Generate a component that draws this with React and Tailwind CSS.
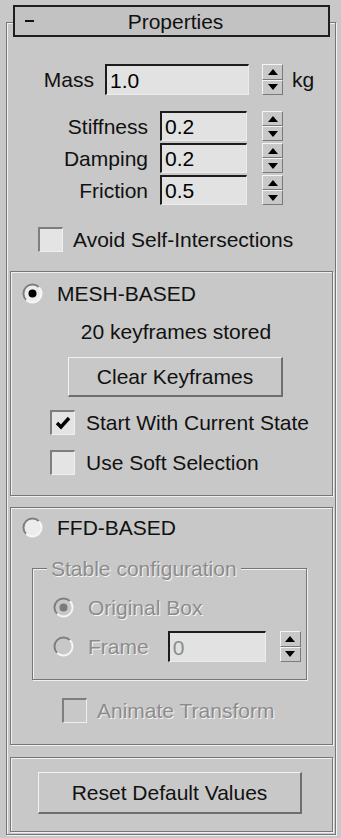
function Spinner({ h = "h-[30px]", disabled = false }) {
  const fill = disabled ? "#555" : "#000";
  return (
    <div className={`w-[21px] ${h} flex flex-col`}>
      <div className="flex-1 flex items-center justify-center border-t border-l border-[#f4f4f4] border-b border-r border-b-[#7a7a7a] border-r-[#7a7a7a]">
        <svg width="10" height="6" viewBox="0 0 10 6"><path d="M5 0 L10 6 L0 6 Z" fill={fill} /></svg>
      </div>
      <div className="flex-1 flex items-center justify-center border-t border-l border-[#f4f4f4] border-b border-r border-b-[#7a7a7a] border-r-[#7a7a7a]">
        <svg width="10" height="6" viewBox="0 0 10 6"><path d="M0 0 L10 0 L5 6 Z" fill={fill} /></svg>
      </div>
    </div>
  );
}

function Field({ value, w, h = "h-[30px]", disabled = false }) {
  return (
    <div
      className={`${w} ${h} bg-[#e2e2e2] border-t-2 border-l-2 border-[#1c1c1c] border-b border-r border-b-[#ececec] border-r-[#ececec] flex items-center pl-[3px] leading-none ${
        disabled ? "text-[#8c8c8c]" : "text-black"
      }`}
    >
      {value}
    </div>
  );
}

function Check({ checked = false, disabled = false }) {
  return (
    <div className={`w-[25px] h-[25px] border-t-2 border-l-2 border-[#7e7e7e] border-b border-r border-b-[#f0f0f0] border-r-[#f0f0f0] flex items-center justify-center ${disabled ? "bg-[#c8c8c8]" : "bg-[#e4e4e4]"}`}>
      {checked && (
        <svg width="16" height="14" viewBox="0 0 16 14">
          <path d="M2 7 L6 11 L14 2" stroke="#000" strokeWidth="3.4" fill="none" />
        </svg>
      )}
    </div>
  );
}

function Radio({ on = false, disabled = false }) {
  return (
    <svg width="21" height="21" viewBox="0 0 21 21" className="shrink-0">
      <circle cx="10.5" cy="10.5" r="9" fill={disabled ? "#c8c8c8" : "#ececec"} />
      <path d="M4.1 16.9 A9 9 0 0 1 16.9 4.1" stroke="#7e7e7e" strokeWidth="2" fill="none" />
      <path d="M16.9 4.1 A9 9 0 0 1 4.1 16.9" stroke="#f6f6f6" strokeWidth="2" fill="none" />
      {on && <circle cx="10.5" cy="10.5" r="4" fill={disabled ? "#7a7a7a" : "#000"} />}
    </svg>
  );
}

function Button({ label, cls }) {
  return (
    <div className={`${cls} bg-[#c8c8c8] border-t border-l border-[#f2f2f2] border-b-2 border-r-2 border-b-[#6e6e6e] border-r-[#6e6e6e] flex items-center justify-center`}>
      {label}
    </div>
  );
}

const dim = "text-[#8c8c8c] [text-shadow:1px_1px_0_#f4f4f4]";
const group = "border border-[#767676] shadow-[inset_1px_1px_0_#f0f0f0,1px_1px_0_#f0f0f0]";

export default function App() {
  return (
    <div className="w-[341px] h-[838px] bg-[#c8c8c8] pt-[5px] font-['Liberation_Sans',Arial,sans-serif] text-[21px] text-[#111] leading-none overflow-hidden">
      <div className="relative z-10 ml-[13px] w-[317px] h-[32px] border-2 border-[#1e1e1e] bg-[#c2c2c2] flex items-center">
        <span className="w-[30px] pl-[10px] flex items-center">
          <span className="block w-[9px] h-[2px] bg-[#111]" />
        </span>
        <span className="flex-1 text-center pr-[22px]">Properties</span>
      </div>

      <div className={`-mt-[15px] ml-[6px] w-[330px] h-[813px] ${group} pt-[41px]`}>
        <div className="flex items-center h-[31px]">
          <span className="w-[87px] text-right">Mass</span>
          <div className="ml-[11px]"><Field value="1.0" w="w-[144px]" h="h-[31px]" /></div>
          <div className="ml-[13px]"><Spinner h="h-[31px]" /></div>
          <span className="ml-[9px]">kg</span>
        </div>

        <div className="mt-[16px] flex flex-col gap-[2px]">
          {[["Stiffness", "0.2"], ["Damping", "0.2"], ["Friction", "0.5"]].map(([l, v]) => (
            <div key={l} className="flex items-center h-[30px]">
              <span className="w-[141px] text-right">{l}</span>
              <div className="ml-[12px]"><Field value={v} w="w-[87px]" /></div>
              <div className="ml-[15px]"><Spinner /></div>
            </div>
          ))}
        </div>

        <div className="mt-[22px] ml-[31px] flex items-center h-[25px]">
          <Check />
          <span className="ml-[10px]">Avoid Self-Intersections</span>
        </div>

        <div className={`mt-[19px] ml-[3px] w-[323px] h-[225px] ${group} pt-[11px]`}>
          <div className="ml-[11px] flex items-center h-[21px]">
            <Radio on />
            <span className="ml-[14px]">MESH-BASED</span>
          </div>
          <div className="mt-[17px] pl-[9px] text-center">20 keyframes stored</div>
          <Button label="Clear Keyframes" cls="mt-[15px] ml-[57px] w-[215px] h-[40px]" />
          <div className="mt-[13px] ml-[39px] flex items-center h-[25px]">
            <Check checked />
            <span className="ml-[11px]">Start With Current State</span>
          </div>
          <div className="mt-[15px] ml-[39px] flex items-center h-[25px]">
            <Check />
            <span className="ml-[11px]">Use Soft Selection</span>
          </div>
        </div>

        <div className={`mt-[11px] ml-[3px] w-[323px] h-[238px] ${group} pt-[9px]`}>
          <div className="ml-[11px] flex items-center h-[21px]">
            <Radio />
            <span className="ml-[14px]">FFD-BASED</span>
          </div>
          <div className={`mt-[30px] ml-[21px] w-[275px] h-[112px] ${group}`}>
            <div className={`-mt-[11px] ml-[14px] w-fit px-[4px] bg-[#c8c8c8] ${dim}`}>Stable configuration</div>
            <div className="mt-[18px] ml-[20px] flex items-center h-[21px]">
              <Radio on disabled />
              <span className={`ml-[14px] ${dim}`}>Original Box</span>
            </div>
            <div className="mt-[13px] ml-[20px] flex items-center h-[31px]">
              <Radio disabled />
              <span className={`ml-[14px] ${dim}`}>Frame</span>
              <div className="ml-[19px]"><Field value="0" w="w-[98px]" h="h-[31px]" disabled /></div>
              <div className="ml-[14px]"><Spinner h="h-[31px]" /></div>
            </div>
          </div>
          <div className="mt-[18px] ml-[51px] flex items-center h-[25px]">
            <Check disabled />
            <span className={`ml-[10px] ${dim}`}>Animate Transform</span>
          </div>
        </div>

        <div className={`mt-[12px] ml-[3px] w-[323px] h-[75px] ${group} pt-[14px]`}>
          <Button label="Reset Default Values" cls="ml-[27px] w-[264px] h-[42px]" />
        </div>
      </div>
    </div>
  );
}
